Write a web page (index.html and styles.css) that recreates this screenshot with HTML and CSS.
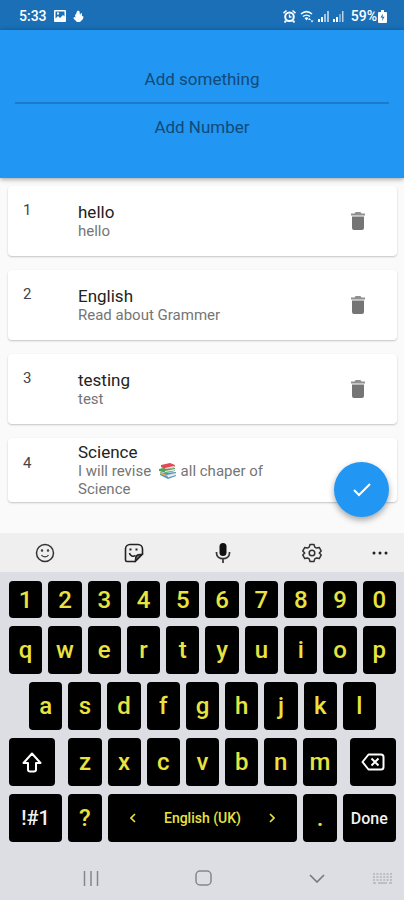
FILE: index.html
```
<!DOCTYPE html>
<html lang="en">
<head>
    <meta charset="UTF-8">
    <meta name="viewport" content="width=device-width, initial-scale=1.0">
    <title>Todo List</title>
    <link rel="stylesheet" href="styles.css">
</head>
<body>
    <div class="status-bar">
        <div class="status-group">
            <span>5:33</span>
            <svg class="gallery" width="12" height="12" viewBox="0 0 12 12"><path fill="#fff" fill-rule="evenodd" d="M1 0h10a1 1 0 0 1 1 1v10a1 1 0 0 1-1 1H1a1 1 0 0 1-1-1V1a1 1 0 0 1 1-1zm.5 1.5v7L4 6l2 2 3-3 1.500 1.500v-5zM3 2.500h2v2H3z"/></svg>
            <svg width="11" height="12" viewBox="0 0 11 12"><path fill="#fff" d="M4 1.500C4 .5 6.500.5 6.500 1.500L7 5l1-2 1 .5V6l1.500.5-.5 2.500-3 3H4L.5 8.500 1 7l1.500.5L2 5l1-1z"/></svg>
        </div>
        <div class="status-group status-right">
            <svg width="13" height="13" viewBox="0 0 13 13"><path fill="#fff" d="M0 2.500L3 0l1 1-3 2.700zM13 2.500L10 0 9 1l3 2.700zM2 10l-1 2 1 1 2-1.500zM11 10l1 2-1 1-2-1.500z"/><circle cx="6.500" cy="6.800" r="4.300" fill="none" stroke="#fff" stroke-width="2"/><path d="M6.500 4.500V7h2" fill="none" stroke="#fff" stroke-width="1.300"/></svg>
            <svg width="14" height="13" viewBox="0 0 14 13"><path d="M1 4c3.500-3 7.500-3 11 0M3 6.500c2-1.800 5-1.800 7 0" fill="none" stroke="#fff" stroke-width="1.500"/><path d="M4.500 8Q6.500 6.500 8.500 8l-2 2.500zM8 10l1.500-2L11 10zM10.500 10.500h3l-1.500 2z" fill="#fff"/></svg>
            <svg width="11" height="11" viewBox="0 0 11 11"><path d="M0 8h2v3H0zM3 6h2v5H3z" fill="#fff"/><path d="M6 3h2v8H6zM9 0h2v11H9z" fill="#fff" opacity=".6"/></svg>
            <svg width="11" height="11" viewBox="0 0 11 11"><path d="M0 8h2v3H0zM3 6h2v5H3z" fill="#fff"/><path d="M6 3h2v8H6z" fill="#fff" opacity=".4"/><path d="M9 0h1.500v11H9z" fill="#fff" opacity=".7"/></svg>
            <span class="battery">59%<svg width="9" height="13" viewBox="0 0 9 13"><path fill="#fff" d="M3 0h3v2h2a1 1 0 0 1 1 1v9a1 1 0 0 1-1 1H1a1 1 0 0 1-1-1V3a1 1 0 0 1 1-1h2z"/><path d="M5 3.500L2.500 7.500h2L4 11l2.500-4.200h-2z" fill="#1a6cb0"/></svg></span>
        </div>
    </div>

    <form class="add-form">
        <input class="add-title" type="text" placeholder="Add something" aria-label="Add something">
        <input class="add-number" type="text" placeholder="Add Number" aria-label="Add Number">
    </form>

    <main>
        <ul class="todo-list">
            <li class="card">
                <span class="num">1</span>
                <div class="info">
                    <div class="title">hello</div>
                    <div class="subtitle">hello</div>
                </div>
                <button class="delete" aria-label="Delete"><svg width="14" height="18" viewBox="0 0 14 18"><path d="M0 1.500h3.500l1-1.500h5l1 1.500H14v2H0z" fill="#909090"/><path d="M1 4.500h12V16a2 2 0 0 1-2 2H3a2 2 0 0 1-2-2z" fill="#757575"/></svg></button>
            </li>
            <li class="card">
                <span class="num">2</span>
                <div class="info">
                    <div class="title">English</div>
                    <div class="subtitle">Read about Grammer</div>
                </div>
                <button class="delete" aria-label="Delete"><svg width="14" height="18" viewBox="0 0 14 18"><path d="M0 1.500h3.500l1-1.500h5l1 1.500H14v2H0z" fill="#909090"/><path d="M1 4.500h12V16a2 2 0 0 1-2 2H3a2 2 0 0 1-2-2z" fill="#757575"/></svg></button>
            </li>
            <li class="card">
                <span class="num">3</span>
                <div class="info">
                    <div class="title">testing</div>
                    <div class="subtitle">test</div>
                </div>
                <button class="delete" aria-label="Delete"><svg width="14" height="18" viewBox="0 0 14 18"><path d="M0 1.500h3.500l1-1.500h5l1 1.500H14v2H0z" fill="#909090"/><path d="M1 4.500h12V16a2 2 0 0 1-2 2H3a2 2 0 0 1-2-2z" fill="#757575"/></svg></button>
            </li>
            <li class="card card-tall">
                <span class="num">4</span>
                <div class="info">
                    <div class="title">Science</div>
                    <div class="subtitle">I will revise
                        <svg class="books" width="18" height="16" viewBox="0 0 18 16"><path d="M2 2l9-2 5 2-1 3-9 1-4-2z" fill="#df4a55"/><path d="M6 5l9-2v1.500L6 6z" fill="#f5eeee"/><path d="M0 6l4-1 4 1 8-1v3L7 10 0 8z" fill="#4fa35a"/><path d="M6 8l10-2v1.500L6 9z" fill="#edf3e8"/><path d="M1 9l5 1 11-1v4l-8 3-8-4z" fill="#4a98cc"/><path d="M8 12l9-2v2l-8 2.500z" fill="#f2ead8"/><path d="M1 9l7 3v1.500L1 11z" fill="#e3ad4f"/></svg>
                        all chaper of<br>Science</div>
                </div>
            </li>
        </ul>
        <button class="fab" aria-label="Save"><svg width="20" height="15" viewBox="0 0 20 15"><path d="M2 8l5 5L18 2" fill="none" stroke="#fff" stroke-width="2"/></svg></button>
    </main>

    <div class="keyboard">
        <div class="toolbar">
            <button aria-label="Emoji"><svg width="20" height="20" viewBox="0 0 20 20" fill="none" stroke="#333" stroke-width="1.500"><circle cx="10" cy="10" r="8.500"/><path d="M6.500 12c1.500 2.500 5.500 2.500 7 0" stroke-width="1.200"/><circle cx="7" cy="7.500" r=".5"/><circle cx="13" cy="7.500" r=".5"/></svg></button>
            <button aria-label="Stickers"><svg width="20" height="20" viewBox="0 0 20 20" fill="none" stroke="#222" stroke-width="1.600"><path d="M6 1.500h8A4.500 4.500 0 0 1 18.500 6v5L11 18.500H3a1.500 1.500 0 0 1-1.500-1.500V6A4.500 4.500 0 0 1 6 1.500z"/><path d="M18 11.500c-5-.5-7 1.500-6.500 6.500z" fill="#777"/><path d="M5.500 10c.5 3 3.500 4 6 2.500"/><path d="M6.500 5.500v2M12.500 5.500v2" stroke-width="2"/></svg></button>
            <button aria-label="Voice"><svg width="16" height="20" viewBox="0 0 16 20"><rect x="4.500" y="0" width="7" height="13" rx="3.500" fill="#111"/><path d="M1.500 9v1c0 7.500 13 7.500 13 0V9M8 16v4" fill="none" stroke="#333" stroke-width="1.700"/></svg></button>
            <button aria-label="Settings"><svg width="20" height="20" viewBox="0 0 20 20" fill="none" stroke="#333" stroke-width="1.500" stroke-linejoin="round"><path d="M8 1.500h4l.8 2.600 1.700 1 2.700-.7 2 3.500L17.300 10l1.900 2.100-2 3.500-2.700-.7-1.700 1-.8 2.600H8l-.8-2.600-1.700-1-2.700.7-2-3.500L2.700 10 .8 7.900l2-3.500 2.700.7 1.700-1z"/><circle cx="10" cy="10" r="2.800"/></svg></button>
            <button aria-label="More"><svg width="16" height="4" viewBox="0 0 16 4" fill="#222"><circle cx="2" cy="2" r="1.500"/><circle cx="8" cy="2" r="1.500"/><circle cx="14" cy="2" r="1.500"/></svg></button>
        </div>
        <div class="keys">
            <div class="row row-digits">
                <button class="key">1</button>
                <button class="key">2</button>
                <button class="key">3</button>
                <button class="key">4</button>
                <button class="key">5</button>
                <button class="key">6</button>
                <button class="key">7</button>
                <button class="key">8</button>
                <button class="key">9</button>
                <button class="key">0</button>
            </div>
            <div class="row">
                <button class="key">q</button>
                <button class="key">w</button>
                <button class="key">e</button>
                <button class="key">r</button>
                <button class="key">t</button>
                <button class="key">y</button>
                <button class="key">u</button>
                <button class="key">i</button>
                <button class="key">o</button>
                <button class="key">p</button>
            </div>
            <div class="row row-home">
                <button class="key">a</button>
                <button class="key">s</button>
                <button class="key">d</button>
                <button class="key">f</button>
                <button class="key">g</button>
                <button class="key">h</button>
                <button class="key">j</button>
                <button class="key">k</button>
                <button class="key">l</button>
            </div>
            <div class="row">
                <button class="key key-shift" aria-label="Shift"><svg width="20" height="21" viewBox="0 0 20 21"><path d="M10 1.500L18.500 11H14v6.500a2 2 0 0 1-2 2H8a2 2 0 0 1-2-2V11H1.500z" fill="none" stroke="#fff" stroke-width="2" stroke-linejoin="round"/></svg></button>
                <button class="key">z</button>
                <button class="key">x</button>
                <button class="key">c</button>
                <button class="key">v</button>
                <button class="key">b</button>
                <button class="key">n</button>
                <button class="key">m</button>
                <button class="key key-back" aria-label="Backspace"><svg width="24" height="18" viewBox="0 0 24 18" fill="none" stroke="#fff" stroke-width="2" stroke-linejoin="round"><path d="M7.500 1.500H20A2.500 2.500 0 0 1 22.500 4v10a2.500 2.500 0 0 1-2.500 2.500H7.500L1.500 9z"/><path d="M10.500 5.500l7 7M17.500 5.500l-7 7"/></svg></button>
            </div>
            <div class="row">
                <button class="key key-fn key-sym">!#1</button>
                <button class="key">?</button>
                <button class="key key-space">
                    <svg width="6" height="10" viewBox="0 0 6 10"><path d="M5 1L1 5l4 4" fill="none" stroke="#e9e340" stroke-width="1.600"/></svg>
                    English (UK)
                    <svg width="6" height="10" viewBox="0 0 6 10"><path d="M1 1l4 4-4 4" fill="none" stroke="#e9e340" stroke-width="1.600"/></svg>
                </button>
                <button class="key">.</button>
                <button class="key key-fn">Done</button>
            </div>
        </div>
        <nav class="nav-bar">
            <button aria-label="Recents"><svg width="16" height="15" viewBox="0 0 16 15"><path d="M1.500 0v15M8 0v15M14.500 0v15" stroke="#858688" stroke-width="1.500"/></svg></button>
            <button aria-label="Home"><svg width="17" height="16" viewBox="0 0 17 16"><rect x="1" y="1" width="15" height="14" rx="4" fill="none" stroke="#858688" stroke-width="1.500"/></svg></button>
            <button aria-label="Hide keyboard"><svg width="16" height="9" viewBox="0 0 16 9"><path d="M1 1l7 7 7-7" fill="none" stroke="#77787a" stroke-width="1.600"/></svg></button>
            <button class="nav-kb" aria-label="Switch keyboard"><svg width="19" height="11" viewBox="0 0 19 11" stroke="#9c9da0" stroke-width="1.200" fill="none"><path d="M0 1h19M0 4h19M0 7h19" stroke-dasharray="2 1.400"/><path d="M0 10h3M5 10h9M16 10h3"/></svg></button>
        </nav>
    </div>
</body>
</html>
```
FILE: styles.css
```
* {
    box-sizing: border-box;
}
body {
    font-family: Roboto, sans-serif;
    background: #fafafa;
    margin: 0;
    min-height: 100vh;
    display: flex;
    flex-direction: column;
}
button {
    border: none;
    padding: 0;
    background: none;
    font-family: inherit;
    display: flex;
    align-items: center;
    justify-content: center;
}
svg {
    flex-shrink: 0;
}

.status-bar {
    height: 30px;
    padding: 2px 17px 0 19px;
    background: #1a6fb6;
    color: #fff;
    font-size: 14px;
    font-weight: 500;
    display: flex;
    justify-content: space-between;
    align-items: center;
}
.status-group {
    display: flex;
    align-items: center;
    gap: 7px;
}
.status-right {
    gap: 4px;
}
.battery {
    display: flex;
    align-items: center;
    gap: 1px;
    margin-left: 3px;
}

.add-form {
    background: #2196f3;
    padding: 26px 15px 29px;
    display: flex;
    flex-direction: column;
    box-shadow: 0 1px 5px rgba(0, 0, 0, 0.4);
    position: relative;
}
.add-form input {
    width: 100%;
    height: 48px;
    padding: 0;
    border: none;
    outline: none;
    background: none;
    color: #12466f;
    font-family: inherit;
    font-size: 17px;
    text-align: center;
}
.add-form .add-title {
    border-bottom: 2px solid #1b7aca;
}
.add-form .add-number {
    height: 45px;
}
.add-form input::placeholder {
    color: #124a78;
}

main {
    position: relative;
    flex: 1;
    padding: 8px 7px 30px 8px;
}
.todo-list {
    list-style: none;
    margin: 0;
    padding: 0;
    display: flex;
    flex-direction: column;
    gap: 14px;
}
.card {
    min-height: 70px;
    padding: 4px 32px 4px 15px;
    background: #fff;
    border-radius: 4px;
    box-shadow: 0 1px 2px rgba(0, 0, 0, 0.22);
    display: flex;
    align-items: center;
}
.card-tall {
    min-height: 64px;
}
.num {
    width: 55px;
    height: 40px;
    line-height: 18px;
    font-size: 15px;
    color: #444;
}
.card-tall .num {
    height: 32px;
}
.info {
    width: 200px;
}
.title {
    font-size: 17px;
    line-height: 20px;
    color: #222;
}
.subtitle {
    font-size: 15px;
    line-height: 18px;
    color: #757575;
}
.books {
    vertical-align: -3px;
    margin-left: 4px;
}
.delete {
    margin-left: auto;
}
.fab {
    position: absolute;
    right: 15px;
    bottom: 16px;
    width: 55px;
    height: 55px;
    border-radius: 50%;
    background: #2196f3;
    box-shadow: 0 3px 6px rgba(0, 0, 0, 0.35);
}

.keyboard {
    background: #dcdee3;
}
.toolbar {
    height: 39px;
    background: #efefef;
    display: grid;
    grid-template-columns: repeat(4, 1fr) 48px;
}
.keys {
    padding: 9px 8px 0 9px;
    display: flex;
    flex-direction: column;
    gap: 8px;
}
.row {
    display: flex;
    gap: 6px;
    height: 48px;
}
.row-digits {
    height: 37px;
}
.row-home {
    padding: 0 20px;
}
.key {
    flex: 10 1 0;
    min-width: 0;
    background: #000;
    border-radius: 4px;
    color: #e9e340;
    font-size: 24px;
    font-weight: 500;
}
.key-shift {
    flex-grow: 14;
    margin-right: 7px;
}
.key-back {
    flex-grow: 14;
    margin-left: 7px;
}
.key-fn {
    flex-grow: 16;
    color: #f2f2f2;
    font-size: 16px;
}
.key-sym {
    font-size: 20px;
}
.key-space {
    flex-grow: 57;
    gap: 28px;
    font-size: 14px;
}
.nav-bar {
    height: 58px;
    padding: 14px 0 0 34px;
    display: grid;
    grid-template-columns: repeat(3, 1fr) 31px;
}
.nav-kb {
    justify-content: flex-start;
}
```
